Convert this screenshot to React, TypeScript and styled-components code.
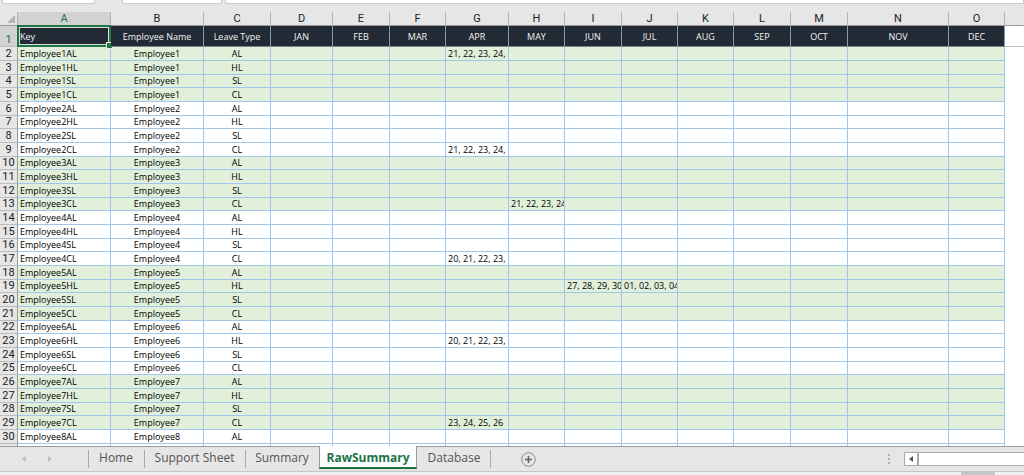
import React from "react";
import styled, { createGlobalStyle, css } from "styled-components";

const GlobalStyle = createGlobalStyle`
  * { box-sizing: border-box; }
  body { margin: 0; background: #e6e6e6; font-family: "Open Sans", "Noto Sans", sans-serif; }
  button { font: inherit; border: 0; padding: 0; background: none; }
`;

const GRID = "#a0c6ea";
const NAVY = "#222a36";
const GREEN = "#217346";

const Window = styled.div`
  display: flex;
  flex-direction: column;
  height: 100vh;
  overflow: hidden;
`;

const FormulaBar = styled.div`
  flex: none;
  display: flex;
  align-items: flex-start;
  height: 12px;
  padding-left: 2px;
`;

const FormulaBox = styled.div<{ $width?: number; $gap?: number }>`
  ${(p) => (p.$width ? `width: ${p.$width}px;` : "flex: 1;")}
  height: 4px;
  margin-right: ${(p) => p.$gap ?? 0}px;
  background: #fff;
  border: 1px solid #cdcdcd;
  border-top: 0;
`;

const Sheet = styled.main`
  flex: 1;
  min-height: 0;
  overflow: hidden;
  background: #fff;
`;

const Table = styled.table`
  width: 100%;
  table-layout: fixed;
  border-collapse: separate;
  border-spacing: 0;
  color: #000;
  font-size: 9px;
  font-weight: 500;
  line-height: 12px;
`;

const Letter = styled.th<{ $selected?: boolean; $last?: boolean }>`
  height: 14px;
  padding: 0;
  background: ${(p) => (p.$selected ? "#d2d2d2" : "#e6e6e6")};
  border-bottom: 1px solid #9a9a9a;
  border-right: 1px solid ${(p) => (p.$last ? "#e6e6e6" : "#b4b4b4")};
  color: ${(p) => (p.$selected ? GREEN : "#222")};
  font: 400 11px/13px Roboto, sans-serif;
  text-align: center;
`;

const Corner = styled.td`
  padding: 0 2px 2px 0;
  background: #e6e6e6;
  border-right: 1px solid #b4b4b4;
  border-bottom: 1px solid #9a9a9a;
  text-align: right;
  vertical-align: bottom;
  svg { display: block; margin-left: auto; }
`;

const RowNumber = styled.th<{ $selected?: boolean }>`
  padding: 0;
  background: ${(p) => (p.$selected ? "#d2d2d2" : "#e6e6e6")};
  border-right: 1px solid #9a9a9a;
  border-bottom: 1px solid #bdbdbd;
  color: ${(p) => (p.$selected ? GREEN : "#222")};
  font: 400 11px/12px Roboto, sans-serif;
  text-align: center;
  vertical-align: bottom;
`;

const HeaderCell = styled.td<{ $selected?: boolean }>`
  position: relative;
  height: 21px;
  padding: 2px 2px 0;
  background: ${NAVY};
  border-right: 1px solid #7d9cba;
  border-bottom: 1px solid #7f7f7f;
  color: #f2f2f2;
  text-align: ${(p) => (p.$selected ? "left" : "center")};
  white-space: nowrap;
`;

const Selection = styled.span`
  position: absolute;
  inset: -1px -1px -1px -1px;
  border: 2px solid ${GREEN};
  box-shadow: inset 0 0 0 1px #d9dedb;
  &::after {
    content: "";
    position: absolute;
    right: -3px;
    bottom: -3px;
    width: 5px;
    height: 5px;
    background: ${GREEN};
    outline: 1px solid #e2efda;
  }
`;

const HeaderRest = styled.td`
  border-bottom: 1px solid #bdbdbd;
`;

const Row = styled.tr<{ $shaded?: boolean }>`
  height: 14px;
  &:nth-child(3n + 1) { height: 13px; }
  &:first-child { height: 21px; }
  --fill: ${(p) => (p.$shaded ? "#e2efda" : "#fff")};
`;

const Cell = styled.td<{ $center?: boolean }>`
  padding: 0 0 0 2px;
  overflow: hidden;
  background: var(--fill);
  border-right: 1px solid ${GRID};
  border-bottom: 1px solid ${GRID};
  white-space: nowrap;
  ${(p) => p.$center && css`padding: 0; text-align: center;`}
`;

const TabBar = styled.nav`
  flex: none;
  display: flex;
  height: 26px;
  background: #e6e6e6;
  color: #555;
  font-size: 12px;
  line-height: 22px;
`;

const Rule = styled.div<{ $width?: number }>`
  ${(p) => (p.$width ? `width: ${p.$width}px;` : "flex: 1;")}
  display: flex;
  align-items: center;
  border-top: 1px solid #9b9b9b;
  border-bottom: 1px solid #c6c6c6;
`;

const Arrows = styled(Rule)`
  gap: 20px;
  padding-left: 21px;
`;

const Arrow = styled.button`
  display: flex;
  width: 6px;
  height: 8px;
`;

const Tab = styled.button<{ $width: number; $left?: boolean; $right?: boolean }>`
  position: relative;
  width: ${(p) => p.$width}px;
  padding-bottom: 2px;
  border-top: 1px solid #9b9b9b;
  border-bottom: 1px solid #c6c6c6;
  color: inherit;
  white-space: nowrap;
  &::before, &::after {
    position: absolute;
    top: 3px;
    width: 1px;
    height: 18px;
    background: #aaa;
  }
  ${(p) => p.$left && css`&::before { content: ""; left: 0; }`}
  ${(p) => p.$right && css`&::after { content: ""; right: 0; }`}
`;

const ActiveSlot = styled.div`
  width: 98px;
  border-bottom: 1px solid #c6c6c6;
`;

const ActiveTab = styled.button`
  display: block;
  width: 100%;
  height: 23px;
  padding-top: 1px;
  background: #fff;
  border-left: 1px solid #9b9b9b;
  border-right: 1px solid #9b9b9b;
  border-bottom: 2px solid ${GREEN};
  color: ${GREEN};
  font-weight: 700;
  white-space: nowrap;
`;

const AddButton = styled.button`
  display: flex;
  margin-left: 30px;
`;

const Scroll = styled.div`
  display: flex;
  align-items: center;
  width: 136px;
  margin-left: auto;
`;

const Grip = styled.span`
  display: grid;
  gap: 2px;
  margin-right: 14px;
  i { width: 2px; height: 2px; background: #b0b0b0; }
`;

const ScrollButton = styled.button`
  display: grid;
  place-items: center;
  width: 14px;
  height: 14px;
  background: #fff;
  border: 1px solid #ababab;
`;

const Track = styled.div`
  flex: 1;
  height: 14px;
  background: #fff;
  border: 1px solid #ababab;
  border-right: 0;
`;

const StatusBar = styled.footer`
  flex: none;
  display: flex;
  justify-content: flex-end;
  height: 3px;
  padding-right: 29px;
  background: #f1f1f1;
`;

const Thumb = styled.span`
  width: 34px;
  background: #c6c6c6;
`;

const widths = [18, 93, 93, 67, 62, 57, 56, 63, 56, 57, 56, 56, 57, 57, 101, 56];
const letters = "ABCDEFGHIJKLMNO".split("");
const headers = ["Key", "Employee Name", "Leave Type", "JAN", "FEB", "MAR", "APR", "MAY", "JUN", "JUL", "AUG", "SEP", "OCT", "NOV", "DEC"];
const months = headers.slice(3);
const leaveTypes = ["AL", "HL", "SL", "CL"];

const leaveDays: Record<string, string> = {
  "2-APR": "21, 22, 23, 24,",
  "9-APR": "21, 22, 23, 24,",
  "13-MAY": "21, 22, 23, 24",
  "17-APR": "20, 21, 22, 23,",
  "19-JUN": "27, 28, 29, 30",
  "19-JUL": "01, 02, 03, 04",
  "23-APR": "20, 21, 22, 23,",
  "29-APR": "23, 24, 25, 26",
};

const rows = Array.from({ length: 29 }, (_, i) => {
  const group = Math.floor(i / 4);
  return { n: i + 2, name: `Employee${group + 1}`, type: leaveTypes[i % 4], shaded: group % 2 === 0 };
});

export default function App() {
  return (
    <Window>
      <GlobalStyle />
      <FormulaBar>
        <FormulaBox $width={93} $gap={27} />
        <FormulaBox $width={100} $gap={3} />
        <FormulaBox />
      </FormulaBar>
      <Sheet>
        <Table>
          <colgroup>
            {widths.map((w, i) => <col key={i} width={w} />)}
            <col />
          </colgroup>
          <thead>
            <tr>
              <Corner>
                <svg width="8" height="8" viewBox="0 0 8 8"><path d="M8 0v8H0z" fill="#b4b4b4" /></svg>
              </Corner>
              {letters.map((l, i) => <Letter key={l} scope="col" $selected={i === 0}>{l}</Letter>)}
              <Letter as="td" $last />
            </tr>
          </thead>
          <tbody>
            <Row>
              <RowNumber scope="row" $selected>1</RowNumber>
              {headers.map((h, i) => (
                <HeaderCell key={h} $selected={i === 0}>{h}{i === 0 && <Selection />}</HeaderCell>
              ))}
              <HeaderRest />
            </Row>
            {rows.map((r) => (
              <Row key={r.n} $shaded={r.shaded}>
                <RowNumber scope="row">{r.n}</RowNumber>
                <Cell>{r.name + r.type}</Cell>
                <Cell $center>{r.name}</Cell>
                <Cell $center>{r.type}</Cell>
                {months.map((m) => <Cell key={m}>{leaveDays[`${r.n}-${m}`]}</Cell>)}
                <td />
              </Row>
            ))}
            <Row>
              <RowNumber />
              {letters.map((l) => <Cell key={l} />)}
              <td />
            </Row>
          </tbody>
        </Table>
      </Sheet>
      <TabBar aria-label="Sheets">
        <Arrows $width={88}>
          <Arrow aria-label="Previous sheet"><svg width="6" height="8"><path d="M5 1v6L1 4z" fill="#bdbdbd" /></svg></Arrow>
          <Arrow aria-label="Next sheet"><svg width="6" height="8"><path d="M1 1v6l4-3z" fill="#bdbdbd" /></svg></Arrow>
        </Arrows>
        <Tab $width={56} $left>Home</Tab>
        <Tab $width={101} $left>Support Sheet</Tab>
        <Tab $width={74} $left>Summary</Tab>
        <ActiveSlot><ActiveTab aria-current="page">RawSummary</ActiveTab></ActiveSlot>
        <Tab $width={74} $right>Database</Tab>
        <Rule>
          <AddButton aria-label="New sheet">
            <svg width="15" height="15" viewBox="0 0 15 15" fill="none">
              <circle cx="7.5" cy="7.5" r="6.8" stroke="#8a8a8a" />
              <path d="M7.5 4v7M4 7.5h7" stroke="#666" strokeWidth="1.7" />
            </svg>
          </AddButton>
          <Scroll>
            <Grip><i /><i /><i /></Grip>
            <ScrollButton aria-label="Scroll left">
              <svg width="4" height="6"><path d="M4 0v6L0 3z" fill="#555" /></svg>
            </ScrollButton>
            <Track />
          </Scroll>
        </Rule>
      </TabBar>
      <StatusBar><Thumb /></StatusBar>
    </Window>
  );
}
